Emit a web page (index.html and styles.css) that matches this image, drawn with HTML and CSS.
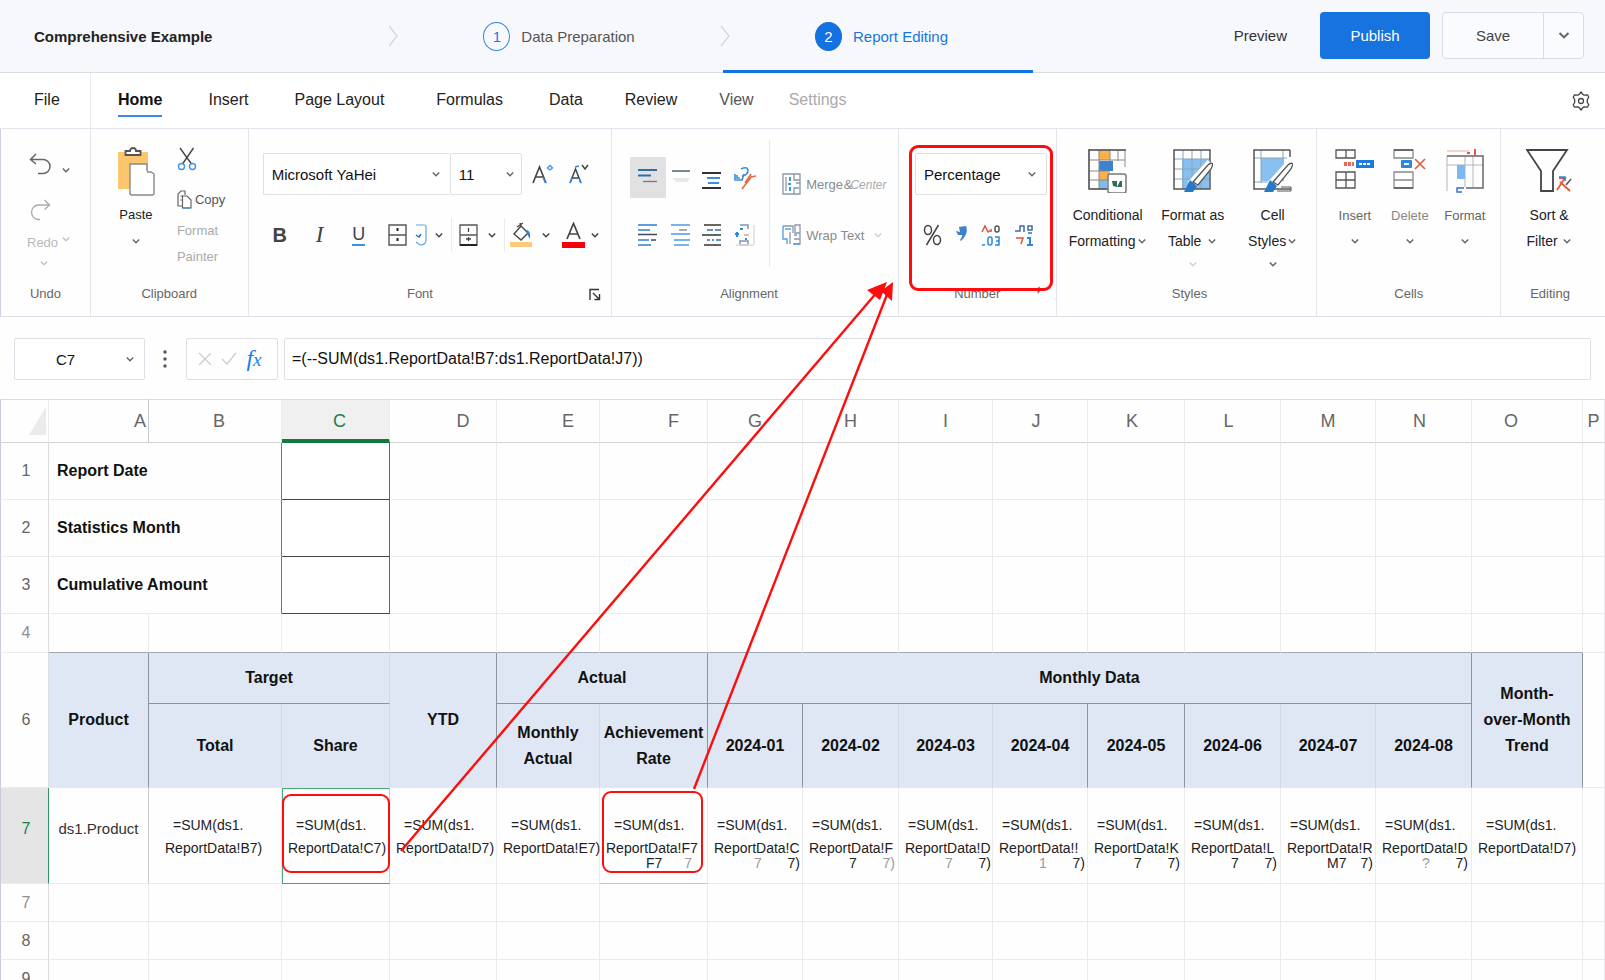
FILE: index.html
```html
<!DOCTYPE html>
<html lang="en">
<head>
<meta charset="utf-8">
<title>Comprehensive Example - Report Editing</title>
<link rel="stylesheet" href="styles.css">
</head>
<body>
<svg class="defs" aria-hidden="true">
  <symbol id="chev" viewBox="0 0 10 10"><path d="M1.800 3.500 5 6.700 8.200 3.500" fill="none" stroke="currentColor" stroke-width="1.500"/></symbol>
  <symbol id="next" viewBox="0 0 10 22"><path d="M1 1 9 11 1 21" fill="none" stroke="#d3d6dc" stroke-width="1.300"/></symbol>
</svg>
<div class="app">
  <header class="topbar">
    <h1 class="title">Comprehensive Example</h1>
    <svg class="next"><use href="#next"/></svg>
    <a class="step" href="#prep"><span class="num">1</span>Data Preparation</a>
    <svg class="next next-over"><use href="#next"/></svg>
    <a class="step active" href="#edit"><span class="num">2</span>Report Editing</a>
    <div class="actions">
      <button class="preview">Preview</button>
      <button class="publish">Publish</button>
      <div class="save-group">
        <button class="save">Save</button>
        <button class="save-more" aria-label="More save options"><svg class="chev chev-lg"><use href="#chev"/></svg></button>
      </div>
    </div>
  </header>

  <nav class="tabs">
    <a class="tab file" href="#file">File</a>
    <div class="tab-list">
      <a class="tab wide current" href="#home">Home</a>
      <a class="tab wide" href="#insert">Insert</a>
      <a class="tab wider" href="#layout">Page Layout</a>
      <a class="tab wide" href="#formulas">Formulas</a>
      <a class="tab" href="#data">Data</a>
      <a class="tab" href="#review">Review</a>
      <a class="tab view" href="#view">View</a>
      <a class="tab dim" href="#settings">Settings</a>
    </div>
    <button class="gear" aria-label="Options"><svg width="18" height="20" viewBox="0 0 18 20" fill="none" stroke="#444" stroke-width="1.300" stroke-linejoin="round"><path d="M7.500 3 9 1 10.500 3 12 4.200 15.500 3.800 16.800 6.200 15.300 8.500V11.500L16.800 13.800 15.500 16.200 12 15.800 10.500 17 9 19 7.500 17 6 15.800 2.500 16.200 1.200 13.800 2.700 11.500V8.500L1.200 6.200 2.500 3.800 6 4.200Z"/><circle cx="9" cy="10" r="2.500"/></svg></button>
  </nav>

  <section class="ribbon">
    <div class="group">
      <div class="body undo-body">
        <button class="undo" aria-label="Undo"><svg width="23" height="22" viewBox="0 0 23 22" fill="none" stroke="#666" stroke-width="1.500"><path d="M7 1 1.500 6.500 7 11M1.500 6.500H14A7 7 0 0 1 14 20.500H9"/></svg><svg class="chev"><use href="#chev"/></svg></button>
        <button class="redo"><svg width="22" height="22" viewBox="0 0 22 22" fill="none" stroke="#aaa" stroke-width="1.400"><path d="M15.500 1 20.500 6 15.500 10.500M20.500 6H9A7.300 7.300 0 0 0 9 20.500H11"/></svg><span class="redo-text">Redo<svg class="chev"><use href="#chev"/></svg></span><svg class="chev redo-chev"><use href="#chev"/></svg></button>
      </div>
      <div class="label">Undo</div>
    </div>

    <div class="group">
      <div class="body clip-body">
        <button class="paste"><svg width="38" height="50" viewBox="0 0 38 50"><path d="M1 5H31V42H1Z" fill="#fcc66f"/><path d="M8.500 8V4H13C13 0 19 0 19 4H23.500V8Z" fill="#fff" stroke="#555" stroke-width="1.800"/><path d="M13 17H30V25H37V48H13Z" fill="#fff"/><path d="M30 24V17H13V46Q13 48 15 48H35Q37 48 37 46V27L34 25H30" fill="none" stroke="#888" stroke-width="1.400"/></svg><span>Paste</span><svg class="chev"><use href="#chev"/></svg></button>
        <div class="clip-side">
          <button class="cut" aria-label="Cut"><svg width="20" height="24" viewBox="0 0 20 24" fill="none" stroke-width="1.400"><path d="M3 1 14.500 17M16.500 1 5.500 17" stroke="#444"/><circle cx="4.500" cy="19.500" r="3" stroke="#3a93e8"/><circle cx="15.500" cy="19.500" r="3" stroke="#3a93e8"/></svg></button>
          <button class="copy"><svg width="15" height="19" viewBox="0 0 15 19" fill="none" stroke="#666" stroke-width="1.200"><path d="M5 16H1V4L4 1H8V5M3.500 6H6M3.500 10H5"/><path d="M5.500 6H10L14 10V18H5.500Z"/><path d="M6 18H13" stroke="#2b87e0"/></svg>Copy</button>
          <button class="painter">Format<br>Painter</button>
        </div>
      </div>
      <div class="label">Clipboard</div>
    </div>

    <div class="group">
      <div class="body font-body">
        <div class="row">
          <div class="combo font-name"><select aria-label="Font"><option>Microsoft YaHei</option></select><svg class="chev"><use href="#chev"/></svg></div>
          <div class="combo font-size"><select aria-label="Font size"><option>11</option></select><svg class="chev"><use href="#chev"/></svg></div>
          <button class="grow" aria-label="Increase font size"><svg width="22" height="22" viewBox="0 0 22 22" fill="none" stroke-width="1.600"><path d="M1 20 7.500 4 14 20M3.500 14H12" stroke="#444"/><path d="M11 14 13.500 20" stroke="#2b87e0"/><path d="M15.500 5 18 2.500 20.500 5 18 7Z" stroke="#3a93e8" stroke-width="1.300"/></svg></button>
          <button class="grow" aria-label="Decrease font size"><svg width="22" height="22" viewBox="0 0 22 22" fill="none" stroke-width="1.500"><path d="M2 20 7.500 6 13 20M4 15H11" stroke="#3a4654"/><path d="M2 20 4 15M13 20 11 15M7 4 11 3" stroke="#2b87e0"/><path d="M14 2 17 6 20 2" stroke="#444"/></svg></button>
        </div>
        <div class="row font-tools">
          <button class="t-b"><b>B</b></button>
          <button class="t-i"><i>I</i></button>
          <button class="t-u"><span>U</span></button>
          <button class="t-wide" aria-label="Borders"><svg width="41" height="24" viewBox="0 0 41 24" fill="none"><path d="M1 2H18V22H1ZM1 12H18" stroke="#555" stroke-width="1.400"/><path d="M9.500 5V8M9.500 15V18" stroke="#222" stroke-width="2"/><path d="M28 2H36Q38 2 38 4V17Q38 22 32 22L28 19" stroke="#5aa6ea" stroke-width="1.200"/><path d="M28 12 31 14 33 11" stroke="#2b6fb5" stroke-width="1.500"/></svg><svg class="chev bold"><use href="#chev"/></svg></button>
          <button class="t-sep" aria-label="Grid lines"><svg width="19" height="24" viewBox="0 0 19 24" fill="none"><path d="M1 2H18V22H1ZM1 12H18" stroke="#555" stroke-width="1.300"/><path d="M9.500 5V9M9.500 14V18M7 16H12" stroke="#444" stroke-width="1.300"/><path d="M1 22H18" stroke="#222" stroke-width="2"/></svg><svg class="chev bold"><use href="#chev"/></svg></button>
          <button class="t-sep" aria-label="Fill colour"><svg width="22" height="26" viewBox="0 0 22 26" fill="none"><path d="M4 12 11 4 18 11 11 18Z M11 4 10 1M7 5 13 1" stroke="#444" stroke-width="1.400"/><path d="M16 8Q21 8 20 17L17 12Z" fill="#2b7fd0"/><path d="M0 20H22V25H0Z" fill="#fbcb7c"/></svg><svg class="chev bold"><use href="#chev"/></svg></button>
          <button class="t-last" aria-label="Font colour"><svg width="23" height="26" viewBox="0 0 23 26" fill="none"><path d="M5 17 11.500 1.500 18 17M7.500 12H15.500" stroke="#444" stroke-width="1.700"/><path d="M0 20H23V26H0Z" fill="#f5000c"/></svg><svg class="chev bold"><use href="#chev"/></svg></button>
        </div>
      </div>
      <div class="label label-font">Font<svg class="launch" width="12" height="13" viewBox="0 0 12 13" fill="none" stroke="#333" stroke-width="1.400"><path d="M1 12V1.500H10M4 5 10 11M10.500 6V11.500H5.500"/></svg></div>
    </div>

    <div class="group">
      <div class="body align-body">
        <div class="align-grid">
          <button class="on" aria-label="Top align"><svg width="22" height="24" viewBox="0 0 22 24" stroke-width="1.800"><path d="M1 4H20M1 9.500H14" stroke="#2f6ea9"/><path d="M6 15.500H20" stroke="#777" stroke-width="1.300"/></svg></button>
          <button aria-label="Middle align"><svg width="20" height="24" viewBox="0 0 20 24"><path d="M1 5H19" stroke="#6d7a8a" stroke-width="1.800"/><path d="M2 13H18M4 15H17" stroke="#d0d3d8"/></svg></button>
          <button aria-label="Bottom align"><svg width="22" height="24" viewBox="0 0 22 24" stroke-width="1.800"><path d="M1 7H20M1 22H20" stroke="#333"/><path d="M6 12H19M7 17H18" stroke="#3a8ee0"/></svg></button>
          <button aria-label="Orientation"><svg width="24" height="26" viewBox="0 0 24 26" fill="none" stroke-width="1.600"><path d="M8 4Q14 1 15 5 15 10 9 11M2 9V15H9L11 9M4 10V13H7" stroke="#3a8ee0"/><path d="M9 24 19 11M18 12 23 11M12 18 18 9" stroke="#e4694d"/></svg></button>
          <button aria-label="Align left"><svg width="22" height="24" viewBox="0 0 22 24" stroke-width="1.700"><path d="M1 2H20M1 7H13M1 17H12M1 22H14" stroke="#2b7fd8"/><path d="M1 11.500H20M14 17H19" stroke="#3c4c60"/></svg></button>
          <button aria-label="Centre"><svg width="22" height="24" viewBox="0 0 22 24" stroke-width="1.400"><path d="M1 2H20M1 11H20M4 17H20M4 22H19" stroke="#4b9be8"/><path d="M9 7H17" stroke="#888"/></svg></button>
          <button aria-label="Align right"><svg width="22" height="24" viewBox="0 0 22 24" stroke-width="1.700"><path d="M3 2H20M1 12H20M3 22H20" stroke="#333"/><path d="M6 7H12M14 7H20M6 17H9M11 17H13M15 17H20" stroke="#2f6ea9"/></svg></button>
          <button aria-label="Indent"><svg width="22" height="24" viewBox="0 0 22 24" fill="none" stroke-width="1.500"><path d="M6 2H14V6M6 18H14V22H6Z" stroke="#7d97b3"/><path d="M1 11H5M3 9V14M6 6H9M11 16H13" stroke="#2b87e0" stroke-width="2"/><path d="M10 12H15" stroke="#e2a58d"/><path d="M20 2V22M2 22H20" stroke="#ddd"/></svg></button>
        </div>
        <div class="align-side">
          <button><svg width="20" height="22" viewBox="0 0 20 22" fill="none" stroke="#8b97a6" stroke-width="1.300"><path d="M1 1H18V21H1ZM4 4V18M12 1V7H18M12 21V15H17M14 10H18"/><path d="M8 4V8M6 11H9M8 14V18" stroke="#3a93e8" stroke-width="2"/></svg><span>Merge <span class="tight">&amp;</span><i>Center</i></span></button>
          <button><svg width="20" height="22" viewBox="0 0 20 22" fill="none" stroke="#8b97a6" stroke-width="1.300"><path d="M1 2H11V9M13 1H18V9H13ZM8 20V8M18 9V14M12 15H18V20H12"/><path d="M3 5H9M1 2V15H5V20M12 11H15M11 20H18" stroke="#5aa0e5" stroke-width="1.400"/></svg><span>Wrap Text</span><svg class="chev faint"><use href="#chev"/></svg></button>
        </div>
      </div>
      <div class="label label-align">Alignment</div>
    </div>

    <div class="group number">
      <div class="body num-body">
        <div class="combo"><select aria-label="Number format"><option>Percentage</option></select><svg class="chev"><use href="#chev"/></svg></div>
        <div class="num-tools">
          <button aria-label="Percent style"><svg width="19" height="22" viewBox="0 0 19 22" fill="none" stroke="#444" stroke-width="1.500"><ellipse cx="5" cy="6" rx="3.500" ry="4.500"/><ellipse cx="14" cy="16" rx="3.500" ry="4.500"/><path d="M15.500 1 3.500 21"/></svg></button>
          <button aria-label="Comma style"><svg width="13" height="22" viewBox="0 0 13 22"><path d="M1 7 5 8 4 3 11 2Q14 9 6 17L5 16Q8 12 7 11L3 11Z" fill="#3b82c8"/></svg></button>
          <button aria-label="Increase decimal"><svg width="20" height="22" viewBox="0 0 20 22" fill="none" stroke-width="1.500"><path d="M1 8 4 2 7 8 10 6V8" stroke="#d8573d"/><rect x="14" y="2" width="4" height="6" rx="2" stroke="#555"/><rect x="7" y="13" width="4" height="8" rx="2" stroke="#2b87e0"/><path d="M1 21H4M14 13H18V21H14M15 17H18" stroke="#2b87e0"/></svg></button>
          <button aria-label="Decrease decimal"><svg width="20" height="22" viewBox="0 0 20 22" fill="none" stroke-width="1.500"><path d="M1 7H6V2H10V8M14 2H18V6H14ZM14 9H18" stroke="#3b6f9f"/><path d="M2 14H9L7 20" stroke="#d8573d"/><path d="M13 14H16V20M13 21H19" stroke="#2b87e0" stroke-width="2"/></svg></button>
        </div>
      </div>
      <div class="label">Number</div>
      <svg class="mini" width="6" height="8" viewBox="0 0 6 8"><path d="M3 0 5 4 2 8 1 4Z" fill="#777"/></svg>
      <span class="callout callout-number"></span>
    </div>

    <div class="group">
      <div class="body styles-body">
        <button class="big"><svg width="40" height="46" viewBox="0 0 40 46" fill="none"><path d="M11 3H22V13H11ZM11 24H22V33H11Z" fill="#fbb04b"/><path d="M11 14H25V24H11Z" fill="#3b82d0"/><path d="M11 33H19V42H11Z" fill="#7fbce8"/><path d="M1 3H37V20M1 3V42H20M1 13H37M1 24H20M1 33H20M11 3V42M22 3V14M30 3V14" stroke="#8a8a8a"/><path d="M1 3H38M1 2V42H20" stroke="#555" stroke-width="1.500"/><rect x="20" y="27" width="18" height="19" rx="2" fill="#fff" stroke="#777" stroke-width="1.500"/><path d="M24 34H29V40L25 39ZM32 34H34V40H29" fill="#2f6f58"/></svg><span>Conditional</span><span>Formatting<svg class="chev"><use href="#chev"/></svg></span></button>
        <button class="big mid"><svg width="40" height="46" viewBox="0 0 40 46" fill="none"><path d="M9 12H36V42H9Z" fill="#86bff0"/><path d="M10 3V42M19 3V42M28 3V42M1 12H37M1 22H37M1 32H37" stroke="#8fa3b5"/><path d="M1 3H37V42H1Z" stroke="#555" stroke-width="1.500"/><path d="M38 16 18 38" stroke="#fff" stroke-width="9"/><path d="M20 35 35 18Q38 15 40 17L38 22 25 38Z" fill="#fff" stroke="#555" stroke-width="1.300"/><path d="M17 33 24 39 20 45H11Z" fill="#2878c8"/></svg><span>Format as</span><span>Table<svg class="chev"><use href="#chev"/></svg></span><span class="more"><svg class="chev faint"><use href="#chev"/></svg></span></button>
        <button class="big end"><svg width="40" height="46" viewBox="0 0 40 46" fill="none"><path d="M8 11H31V34H8Z" fill="#86bff0"/><path d="M8 3V36M30 3V12M1 11H34M1 35H20" stroke="#8fa3b5"/><path d="M37 3H1V42H38M37 3V10" stroke="#555" stroke-width="1.500"/><path d="M38 16 18 38" stroke="#fff" stroke-width="9"/><path d="M20 35 35 18Q38 15 40 17L38 22 25 38Z" fill="#fff" stroke="#555" stroke-width="1.300"/><path d="M17 33 24 39 20 45H11Z" fill="#2878c8"/><path d="M28 40H38V44H24" stroke="#555"/></svg><span>Cell</span><span>Styles<svg class="chev"><use href="#chev"/></svg></span><span class="more"><svg class="chev"><use href="#chev"/></svg></span></button>
      </div>
      <div class="label label-styles">Styles</div>
    </div>

    <div class="group">
      <div class="body cells-body">
        <button class="big soft"><svg width="40" height="46" viewBox="0 0 40 46" fill="none"><path d="M1 3H20V11H1ZM11 3V11M1 25H20V41H1ZM11 25V41M1 33H20" stroke="#555" stroke-width="1.300"/><path d="M21 13H39V21H21Z" fill="#1f7ae0"/><path d="M24 17H35" stroke="#fff" stroke-width="2" stroke-dasharray="3 1"/><path d="M9 17H19" stroke="#ea6a56" stroke-width="4" stroke-dasharray="3 1"/></svg><span>Insert</span><span><svg class="chev"><use href="#chev"/></svg></span></button>
        <button class="big soft lite"><svg width="34" height="46" viewBox="0 0 34 46" fill="none"><path d="M1 3H20V11H1ZM1 25H20V41H1ZM1 33H20" stroke="#888" stroke-width="1.300"/><path d="M1 3H20M1 41H20" stroke="#555" stroke-width="1.500"/><rect x="8" y="13" width="11" height="8" rx="1" fill="#2b87e0"/><path d="M11 17H16" stroke="#fff" stroke-width="2"/><path d="M22 12 32 22M32 12 22 22" stroke="#e2593f" stroke-width="1.600"/></svg><span>Delete</span><span><svg class="chev"><use href="#chev"/></svg></span></button>
        <button class="big soft"><svg width="38" height="46" viewBox="0 0 38 46" fill="none"><path d="M1 9V44M19 9V40M27 9V40M1 18H37" stroke="#b5b5b5"/><path d="M1 9H37V41H20" stroke="#666" stroke-width="1.500"/><path d="M11 18H19V32H11Z" fill="#7db9f0"/><path d="M1 4H23" stroke="#f3a793"/><path d="M21 6H24M29 2V9" stroke="#e2593f" stroke-width="2"/><path d="M18 41H11V45H16" stroke="#2b6fd0" stroke-width="1.400"/></svg><span>Format</span><span><svg class="chev"><use href="#chev"/></svg></span></button>
      </div>
      <div class="label">Cells</div>
    </div>

    <div class="group">
      <div class="body edit-body">
        <button class="big"><svg width="46" height="46" viewBox="0 0 46 46" fill="none"><path d="M1 3H41L27 24V44H15V24Z" stroke="#444" stroke-width="1.800"/><path d="M33 31H39L31 43M34 35 44 44" stroke="#e2593f" stroke-width="1.800"/><path d="M33 30H39V34" stroke="#2b87e0" stroke-width="1.500"/><path d="M40 38 45 32" stroke="#555" stroke-width="1.500"/></svg><span>Sort &amp;</span><span>Filter<svg class="chev"><use href="#chev"/></svg></span></button>
      </div>
      <div class="label label-edit">Editing</div>
    </div>
  </section>

  <section class="formula-bar">
    <div class="combo name-box"><select aria-label="Cell"><option>C7</option></select><svg class="chev"><use href="#chev"/></svg></div>
    <svg class="dots" width="6" height="20" viewBox="0 0 6 20" fill="#555"><circle cx="3" cy="3" r="1.700"/><circle cx="3" cy="10" r="1.700"/><circle cx="3" cy="17" r="1.700"/></svg>
    <div class="fx-box">
      <button aria-label="Cancel"><svg width="14" height="14" viewBox="0 0 14 14"><path d="M1 1 13 13M13 1 1 13" stroke="#ccc" stroke-width="1.200"/></svg></button>
      <button aria-label="Enter"><svg width="16" height="14" viewBox="0 0 16 14"><path d="M1 7 6 12 15 1" fill="none" stroke="#ccc" stroke-width="1.200"/></svg></button>
      <button class="fx" aria-label="Insert function"><i>f<small>x</small></i></button>
    </div>
    <input class="formula" type="text" aria-label="Formula" value="=(--SUM(ds1.ReportData!B7:ds1.ReportData!J7))">
  </section>

  <main class="sheet">
    <table>
      <colgroup>
        <col class="w49"><col class="w100"><col class="w133"><col class="w108"><col class="w107"><col class="w103"><col class="w108"><col class="w95"><col class="w96"><col class="w94"><col class="w95"><col class="w97"><col class="w96"><col class="w95"><col class="w96"><col class="w111"><col class="w22">
      </colgroup>
      <thead>
        <tr><th class="corner"><svg width="17" height="28" viewBox="0 0 17 28"><path d="M17 0V28H0Z" fill="#ebebeb"/></svg></th><th class="col-a strong">A</th><th class="nudge">B</th><th class="col-sel nudge">C</th><th class="push">D</th><th class="push">E</th><th class="push">F</th><th>G</th><th>H</th><th>I</th><th class="back">J</th><th class="back">K</th><th class="back">L</th><th>M</th><th class="back">N</th><th class="pull">O</th><th>P</th></tr>
      </thead>
      <tbody>
        <tr class="r57"><th>1</th><td colspan="2" class="field">Report Date</td><td class="boxed"></td><td></td><td></td><td></td><td></td><td></td><td></td><td></td><td></td><td></td><td></td><td></td><td></td><td></td></tr>
        <tr class="r57"><th>2</th><td colspan="2" class="field">Statistics Month</td><td class="boxed"></td><td></td><td></td><td></td><td></td><td></td><td></td><td></td><td></td><td></td><td></td><td></td><td></td><td></td></tr>
        <tr class="r57"><th>3</th><td colspan="2" class="field">Cumulative Amount</td><td class="boxed"></td><td></td><td></td><td></td><td></td><td></td><td></td><td></td><td></td><td></td><td></td><td></td><td></td><td></td></tr>
        <tr class="r39 above-head"><th class="fade">4</th><td></td><td></td><td></td><td></td><td></td><td></td><td></td><td></td><td></td><td></td><td></td><td></td><td></td><td></td><td></td><td class="plain"></td></tr>
        <tr class="r51"><th rowspan="2">6</th><td rowspan="2" class="hd dark">Product</td><td colspan="2" class="hd under">Target</td><td rowspan="2" class="hd dark">YTD</td><td colspan="2" class="hd under dark">Actual</td><td colspan="8" class="hd under dark">Monthly Data</td><td rowspan="2" class="hd dark">Month-<br>over-Month<br>Trend</td><td rowspan="2"></td></tr>
        <tr class="r84"><td class="hd">Total</td><td class="hd">Share</td><td class="hd">Monthly Actual</td><td class="hd dark">Achievement Rate</td><td class="hd dark">2024-01</td><td class="hd">2024-02</td><td class="hd">2024-03</td><td class="hd dark">2024-04</td><td class="hd dark">2024-05</td><td class="hd">2024-06</td><td class="hd">2024-07</td><td class="hd dark">2024-08</td></tr>
        <tr class="r96">
          <th class="row-sel">7</th>
          <td class="product strong">ds1.Product</td>
          <td class="fm first"><div class="l1">=SUM(ds1.</div><div class="l2">ReportData!B7)</div></td>
          <td class="fm cell-sel"><div class="l1">=SUM(ds1.</div><div class="l2">ReportData!C7)</div><span class="callout callout-c"></span></td>
          <td class="fm"><div class="l1">=SUM(ds1.</div><div class="l2">ReportData!D7)</div></td>
          <td class="fm"><div class="l1">=SUM(ds1.</div><div class="l2">ReportData!E7)</div></td>
          <td class="fm cell-f"><div class="l1">=SUM(ds1.</div><div class="l2">ReportData!F7</div><div class="l3"><span>F7</span><span class="pale">7</span></div><span class="callout callout-f"></span></td>
          <td class="fm slim"><div class="l1">=SUM(ds1.</div><div class="l2">ReportData!C</div><div class="l3"><span class="pale">7</span><span>7)</span></div></td>
          <td class="fm slim"><div class="l1">=SUM(ds1.</div><div class="l2">ReportData!F</div><div class="l3"><span>7</span><span class="pale">7)</span></div></td>
          <td class="fm slim"><div class="l1">=SUM(ds1.</div><div class="l2">ReportData!D</div><div class="l3"><span class="pale">7</span><span>7)</span></div></td>
          <td class="fm slim"><div class="l1">=SUM(ds1.</div><div class="l2">ReportData!!</div><div class="l3"><span class="pale">1</span><span>7)</span></div></td>
          <td class="fm slim"><div class="l1">=SUM(ds1.</div><div class="l2">ReportData!K</div><div class="l3"><span>7</span><span>7)</span></div></td>
          <td class="fm slim"><div class="l1">=SUM(ds1.</div><div class="l2">ReportData!L</div><div class="l3"><span>7</span><span>7)</span></div></td>
          <td class="fm slim"><div class="l1">=SUM(ds1.</div><div class="l2">ReportData!R</div><div class="l3"><span>M7</span><span>7)</span></div></td>
          <td class="fm slim"><div class="l1">=SUM(ds1.</div><div class="l2">ReportData!D</div><div class="l3"><span class="pale">?</span><span>7)</span></div></td>
          <td class="fm"><div class="l1">=SUM(ds1.</div><div class="l2">ReportData!D7)</div></td>
          <td></td>
        </tr>
        <tr class="r38"><th class="fade">7</th><td></td><td></td><td></td><td></td><td></td><td></td><td></td><td></td><td></td><td></td><td></td><td></td><td></td><td></td><td></td><td></td></tr>
        <tr class="r38"><th>8</th><td></td><td></td><td></td><td></td><td></td><td></td><td></td><td></td><td></td><td></td><td></td><td></td><td></td><td></td><td></td><td></td></tr>
        <tr class="r38"><th>9</th><td></td><td></td><td></td><td></td><td></td><td></td><td></td><td></td><td></td><td></td><td></td><td></td><td></td><td></td><td></td><td></td></tr>
      </tbody>
    </table>
  </main>

  <svg class="arrows" width="1605" height="980" viewBox="0 0 1605 980" aria-hidden="true">
    <g stroke="#fd0d0d" stroke-width="2.400" fill="none"><path d="M401 851 878 291"/><path d="M694 789 888 292"/></g>
    <path d="M867 290 887 282 880 300ZM881 291 893 282 892 301Z" fill="#fd0d0d"/>
  </svg>
</div>
</body>
</html>
```
FILE: styles.css
```css
* { box-sizing: border-box; }
body { margin: 0; font-family: "Liberation Sans", Arial, sans-serif; font-size: 15px; color: #222; background: #fefefe; }
button { font: inherit; color: inherit; background: none; border: 0; padding: 0; margin: 0; cursor: pointer; }
a { color: inherit; text-decoration: none; }
svg { display: block; flex: none; }
.defs { position: absolute; width: 0; height: 0; }
.app { position: relative; height: 100vh; display: flex; flex-direction: column; overflow: hidden; }
.chev { width: 10px; height: 10px; color: #666; }
.chev-lg { width: 14px; height: 14px; }
.chev.bold { color: #444; }
.chev.faint { color: #d0d0d0; }

/* top bar */
.topbar { flex: none; height: 73px; display: flex; align-items: center; padding: 0 21px 0 34px; background: #f7f8fc; border-bottom: 1px solid #d9dce5; }
.title { flex: none; width: 354px; margin: 0; font-size: 15px; font-weight: bold; }
.next { width: 10px; height: 22px; }
.next-over { margin-right: -7px; }
.step { width: 322px; height: 73px; display: flex; align-items: center; justify-content: center; gap: 11px; color: #555; }
.step .num { width: 27px; height: 29px; border: 1px solid #2e86ea; border-radius: 50%; display: flex; align-items: center; justify-content: center; color: #1e7ce8; }
.step.active { width: 310px; color: #1677e2; border-bottom: 3px solid #1174e2; border-top: 3px solid transparent; padding-left: 7px; }
.step.active .num { background: #1372e0; border-color: #1372e0; color: #fff; }
.actions { margin-left: auto; display: flex; align-items: center; height: 47px; margin-bottom: 2px; }
.preview { margin-right: 33px; color: #333; }
.publish { width: 110px; height: 47px; border-radius: 4px; background: #1673e0; color: #fff; margin-right: 12px; }
.save-group { display: flex; height: 47px; border: 1px solid #d7dce8; border-radius: 4px; color: #444; background: #fafbfe; }
.save { width: 100px; }
.save-more { width: 40px; border-left: 1px solid #d7dce8; display: flex; align-items: center; justify-content: center; }

/* tabs */
.tabs { flex: none; height: 56px; display: flex; align-items: stretch; font-size: 16px; background: #fff; }
.tab { display: flex; align-items: center; padding-bottom: 1px; }
.file { width: 91px; padding-left: 34px; border-bottom: 1px solid #e3e5ec; border-right: 1px solid #ebedf2; }
.tab-list { flex: 1; display: flex; gap: 42px; padding-left: 27px; border-bottom: 1px solid #e3e5ec; }
.wide { margin-right: 4px; }
.wider { margin-right: 10px; }
.current { font-weight: bold; color: #111; background: linear-gradient(#3a8ae6, #3a8ae6) center 42px / 100% 2px no-repeat; }
.view { color: #555; margin-right: -7px; }
.dim { color: #aaa; }
.gear { padding-right: 15px; border-bottom: 1px solid #e3e5ec; }

/* ribbon */
.ribbon { flex: none; height: 188px; display: grid; grid-template-columns: 90fr 158fr 364fr 287fr 158fr 261fr 184fr 104fr; border-bottom: 1px solid #dcdfe8; border-left: 1px solid #cfd2de; }
.group { position: relative; display: flex; flex-direction: column; border-right: 1px solid #e3e5ed; font-size: 13px; padding-bottom: 12px; min-width: 0; }
.group:last-child { border-right: 0; }
.body { flex: 1; display: flex; }
.label { position: relative; line-height: 20px; text-align: center; color: #666; }
.label-font { padding-right: 20px; }
.label-align { padding-right: 12px; }
.label-styles { padding-left: 6px; }
.label-edit { padding-right: 6px; }
.row { display: flex; align-items: center; }
.undo-body { flex-direction: column; align-items: flex-start; padding: 24px 0 0 28px; }
.undo { display: flex; align-items: flex-end; gap: 9px; margin-bottom: 24px; }
.redo { display: flex; flex-direction: column; color: #b9b9b9; }
.redo .chev { color: #c4c4c4; }
.redo-text { display: flex; align-items: flex-start; gap: 3px; margin: 13px 0 0 -2px; line-height: 18px; }
.redo-chev { margin: 6px 0 0 10px; }
.clip-body { padding: 18px 0 0 22px; gap: 18px; }
.paste { width: 46px; display: flex; flex-direction: column; align-items: center; align-self: flex-start; color: #222; }
.paste span { line-height: 26px; margin: 5px 0 8px; }
.clip-side { display: flex; flex-direction: column; align-items: flex-start; color: #555; }
.copy { display: flex; align-items: center; gap: 3px; height: 22px; margin: 17px 0 8px; }
.painter { line-height: 26px; color: #aaa; text-align: left; }
.font-body { flex-direction: column; padding: 24px 0 0 14px; }
.combo { position: relative; height: 42px; border: 1px solid #dddfe6; background: #fff; border-radius: 2px; }
.combo select { width: 100%; height: 100%; border: 0; background: none; appearance: none; font: inherit; font-size: 15px; color: #111; padding: 0 8px; }
.combo .chev { position: absolute; right: 9px; top: 15px; pointer-events: none; }
.font-name { width: 187px; border-right: 0; }
.font-size { width: 72px; }
.font-size .chev { right: 6px; }
.grow { margin-left: 10px; }
.grow + .grow { margin-left: 14px; }
.font-tools { margin-top: 28px; height: 24px; }
.font-tools button { display: flex; align-items: center; justify-content: center; gap: 5px; height: 34px; flex: none; color: #444; }
.font-tools .t-b { width: 34px; font-size: 20px; }
.font-tools .t-i { width: 46px; font-size: 20px; }
.t-i i { font-family: "Liberation Serif", serif; font-size: 23px; }
.font-tools .t-u { width: 32px; font-size: 18px; }
.t-u span { line-height: 19px; border-bottom: 2px solid #3a93e8; }
.t-wide { width: 76px; padding-left: 6px; }
.font-tools .t-sep { width: 53px; border-left: 1px solid #ececf0; gap: 9px; }
.t-last { width: 49px; }
.launch { position: absolute; right: 10px; top: 4px; }
.align-body { padding: 11px 0 0 18px; align-items: flex-start; color: #8b8b8b; }
.align-grid { display: grid; grid-template-columns: 36px 30px 32px 34px; grid-template-rows: 41px 24px; row-gap: 25px; padding-top: 17px; }
.align-grid button { display: flex; align-items: center; justify-content: center; }
.on { background: #e1e1e1; }
.align-side { margin-left: 7px; border-left: 1px solid #e8e8ec; height: 127px; padding: 32px 0 0 12px; display: flex; flex-direction: column; gap: 27px; }
.align-side button { display: flex; align-items: center; gap: 4px; height: 24px; white-space: nowrap; }
.align-side .chev { margin-left: 5px; }
.align-side i { font-size: 12px; color: #aaa; margin-left: -2px; }
.tight { margin-left: -3px; }
.num-body { flex-direction: column; padding: 24px 9px 0 16px; }
.num-tools { display: flex; align-items: center; justify-content: space-between; height: 24px; margin-top: 28px; padding: 0 13px 0 8px; }
.mini { position: absolute; right: 14px; bottom: 22px; }
.callout { position: absolute; border: 2px solid #fd0d0d; border-radius: 9px; pointer-events: none; z-index: 2; }
.callout-number { inset: 16px 3px 25px 10px; border-width: 3px; }
.big { display: flex; flex-direction: column; align-items: center; align-self: flex-start; font-size: 14px; color: #222; padding-top: 18px; width: 86px; }
.big > svg { margin-bottom: 9px; }
.big > span { display: flex; align-items: center; justify-content: center; gap: 1px; height: 26px; white-space: nowrap; }
.big .more { height: 20px; }
.mid { width: 84px; }
.mid span { gap: 6px; }
.end { width: 76px; }
.styles-body { padding-left: 8px; }
.cells-body { padding-left: 10px; }
.soft { width: 55px; font-size: 13px; color: #666; }
.lite { color: #888; }
.edit-body { justify-content: center; padding-right: 8px; }
.edit-body span { gap: 4px; }

/* formula bar */
.formula-bar { flex: none; display: flex; align-items: center; padding: 21px 14px 19px 14px; }
.name-box { width: 131px; }
.name-box select { padding-left: 41px; }
.dots { margin: 0 18px 0 17px; }
.fx-box { width: 92px; height: 42px; border: 1px solid #dddfe6; border-radius: 2px; display: flex; align-items: center; justify-content: center; gap: 9px; margin-right: 6px; padding-right: 4px; }
.fx { color: #1c7fe8; font-family: "Liberation Serif", serif; font-size: 24px; line-height: 24px; }
.fx small { font-size: 19px; }
.formula { flex: 1; height: 42px; border: 1px solid #dddfe6; border-radius: 2px; background: #fff; padding: 0 7px; font: inherit; font-size: 16px; color: #111; }

/* sheet */
.sheet { flex: 1; min-height: 0; overflow: hidden; }
table { width: 100%; table-layout: fixed; border-collapse: separate; border-spacing: 0; }
.w49 { width: 49px; } .w100 { width: 100px; } .w133 { width: 133px; } .w108 { width: 108px; }
.w107 { width: 107px; } .w103 { width: 103px; } .w95 { width: 95px; } .w96 { width: 96px; }
.w94 { width: 94px; } .w97 { width: 97px; } .w111 { width: 111px; } .w22 { width: 22px; }
td, th { padding: 0; border-right: 1px solid #ebebee; border-bottom: 1px solid #ebebee; }
thead th { height: 44px; font-size: 18px; font-weight: normal; color: #666; border-top: 1px solid #dadde5; border-bottom-color: #d2d4d8; }
thead .corner { border-left: 1px solid #c9ccd8; }
thead .corner svg { margin: 0 2px 0 auto; }
thead .col-a { text-align: right; padding-right: 2px; }
thead .nudge { padding-left: 8px; }
thead .push { padding-left: 40px; }
thead .back { padding-right: 8px; }
thead .pull { padding-right: 32px; }
thead .col-sel { background: #f0f0f0; color: #1b7f4b; border-bottom: 4px solid #127a3f; padding-top: 3px; }
tbody th { font-size: 16px; font-weight: normal; color: #666; border-left: 1px solid #c9ccd8; border-right-color: #dcdcdf; padding-left: 3px; }
tbody .fade { color: #8d8d8d; }
.strong { border-right-color: #c9cacd; }
.r57 > * { height: 57px; }
.r39 > * { height: 39px; }
.r51 > * { height: 51px; }
.r84 > * { height: 84px; }
.r96 > * { height: 96px; }
.r38 > * { height: 38px; }
.field { font-size: 16px; font-weight: bold; color: #111; padding-left: 8px; border-right-color: #777; }
.boxed { border-right-color: #666; border-bottom-color: #444; background: #fff; }
.above-head td { border-bottom-color: #a3a8b3; }
.above-head .plain { border-bottom-color: #ebebee; }
.hd { background: #dfe7f4; border-right-color: #d3dae6; border-bottom-color: #dfe7f4; font-size: 16px; font-weight: bold; line-height: 26px; color: #111; text-align: center; }
.hd.dark { border-right-color: #8e949f; }
.hd.under { border-bottom-color: #8e949f; }
.product { text-align: center; color: #333; padding-bottom: 14px; }
tbody .row-sel { background: #e5e5e5; color: #1b7f4b; border-right-color: #2f9460; padding-bottom: 14px; }
.fm { position: relative; vertical-align: top; padding: 26px 0 0 6px; font-size: 14px; line-height: 23px; color: #222; white-space: nowrap; }
.fm.first { padding-left: 16px; }
.l1 { padding-left: 8px; }
.slim .l1 { padding-left: 3px; }
.l3 { display: flex; justify-content: space-between; width: 86px; padding-left: 40px; margin-top: -4px; line-height: 15px; }
.pale { color: #999; }
.cell-sel { border: 1px solid #4aa77b; border-right-color: #b9d9c9; padding: 25px 0 0 5px; }
.cell-f { border-bottom-color: #bccac4; }
.callout-c { inset: 5px -1px 10px -1px; }
.callout-f { inset: 3px 4px 10px 2px; }
.arrows { position: absolute; left: 0; top: 0; pointer-events: none; z-index: 3; }
```
